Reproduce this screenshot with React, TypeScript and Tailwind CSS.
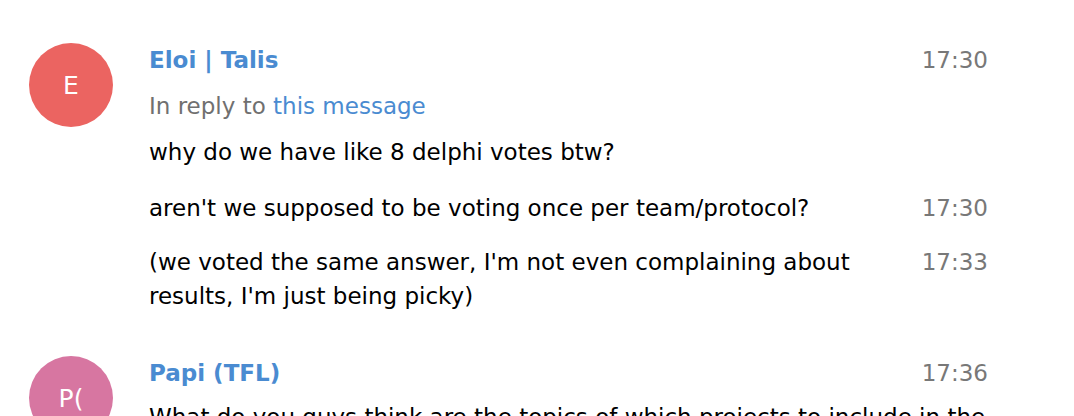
import React from "react";

const FONT = { fontFamily: '"DejaVu Sans", "Liberation Sans", sans-serif' };

function Avatar({ letter, color }: { letter: string; color: string }) {
  return (
    <div className={`h-[84px] w-[84px] shrink-0 rounded-full flex items-center justify-center text-white text-[25px] ${color}`}>
      {letter}
    </div>
  );
}

function Time({ t }: { t: string }) {
  return <span className="text-[23px] leading-[35px] text-[#787878] shrink-0">{t}</span>;
}

export default function App() {
  return (
    <div className="w-[1074px] h-[416px] overflow-hidden bg-white text-[23px] leading-[35px]" style={FONT}>
      {/* Eloi group */}
      <div className="flex gap-[36px] pl-[29px] pr-[86px] pt-[43px]">
        <Avatar letter="E" color="bg-[#eb6461]" />
        <div className="flex-1">
          <div className="flex justify-between">
            <span className="font-bold text-[#4a8bd1]">Eloi | Talis</span>
            <Time t="17:30" />
          </div>
          <div className="text-[#707070] mt-[11px]">
            In reply to <span className="text-[#4a8bd1]">this message</span>
          </div>
          <div className="text-black mt-[11px]">why do we have like 8 delphi votes btw?</div>
          <div className="flex justify-between mt-[21px]">
            <span className="text-black">aren't we supposed to be voting once per team/protocol?</span>
            <Time t="17:30" />
          </div>
          <div className="flex justify-between gap-[40px] mt-[19px]">
            <span className="text-black leading-[34px]">
              (we voted the same answer, I'm not even complaining about results, I'm just being picky)
            </span>
            <Time t="17:33" />
          </div>
        </div>
      </div>
      {/* Papi group */}
      <div className="flex gap-[36px] pl-[29px] pr-[86px] pt-[43px]">
        <Avatar letter="P(" color="bg-[#d776a1]" />
        <div className="flex-1">
          <div className="flex justify-between">
            <span className="font-bold text-[#4a8bd1]">Papi (TFL)</span>
            <Time t="17:36" />
          </div>
          <div className="text-black mt-[9px] whitespace-nowrap">
            What do you guys think are the topics of which projects to include in the
          </div>
        </div>
      </div>
    </div>
  );
}
